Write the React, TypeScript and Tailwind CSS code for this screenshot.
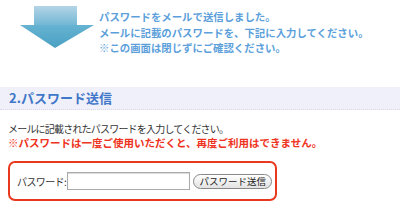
export default function App() {
  const jp = { fontFamily: '"Noto Sans CJK JP", "Noto Sans", sans-serif' };
  return (
    <div className="w-[400px] h-[216px] bg-white overflow-hidden" style={jp}>
      <div className="flex h-[87px]">
        <svg width="95" height="50" viewBox="0 0 95 50" className="shrink-0">
          <defs>
            <linearGradient id="shaft" x1="0" y1="0" x2="0" y2="1">
              <stop offset="0" stopColor="#b4d4e6" />
              <stop offset="1" stopColor="#6fb6d4" />
            </linearGradient>
            <linearGradient id="head" x1="0" y1="0" x2="0" y2="1">
              <stop offset="0" stopColor="#66b3d2" />
              <stop offset="1" stopColor="#4aa0c2" />
            </linearGradient>
          </defs>
          <rect x="34" y="6" width="43" height="20" fill="url(#shaft)" />
          <polygon points="20,25 94,25 55,48" fill="url(#head)" />
        </svg>
        <div className="pl-[4px] pt-[9px] text-[10.4px] leading-[15.5px] font-bold text-[#5c9fdb] whitespace-nowrap">
          <p>パスワードをメールで送信しました。</p>
          <p>メールに記載のパスワードを、下記に入力してください。</p>
          <p>※この画面は閉じずにご確認ください。</p>
        </div>
      </div>
      <div className="h-[23px] bg-[#f0f0fa] border-b border-dotted border-[#d8d8e8] pl-[9px] flex items-center">
        <span className="text-[13px] font-bold text-[#3f77c9]">2.パスワード送信</span>
      </div>
      <div className="pl-[8px] pt-[12px] leading-[14px] whitespace-nowrap">
        <p className="text-[10px] text-[#333] tracking-[-0.8px]">メールに記載されたパスワードを入力してください。</p>
        <p className="text-[10.5px] font-bold text-[#ee3322]">※パスワードは一度ご使用いただくと、再度ご利用はできません。</p>
      </div>
      <div className="ml-[8px] mt-[11px] w-[269px] h-[40px] border-2 border-[#e8391e] rounded-[7px] flex items-center pl-[7px] whitespace-nowrap">
        <span className="shrink-0 text-[10px] tracking-[-0.6px] text-[#333]">パスワード:</span>
        <input
          type="text"
          className="shrink-0 ml-[1px] w-[123px] h-[18px] border border-[#aaa] bg-white shadow-[inset_0_1px_1px_rgba(0,0,0,0.15)]"
        />
        <button className="shrink-0 ml-[3px] h-[15px] w-[79px] rounded-full border border-[#888] bg-gradient-to-b from-white to-[#e2e2e2] text-[9.5px] leading-[13px] text-[#222] flex items-center justify-center">
          パスワード送信
        </button>
      </div>
    </div>
  );
}
